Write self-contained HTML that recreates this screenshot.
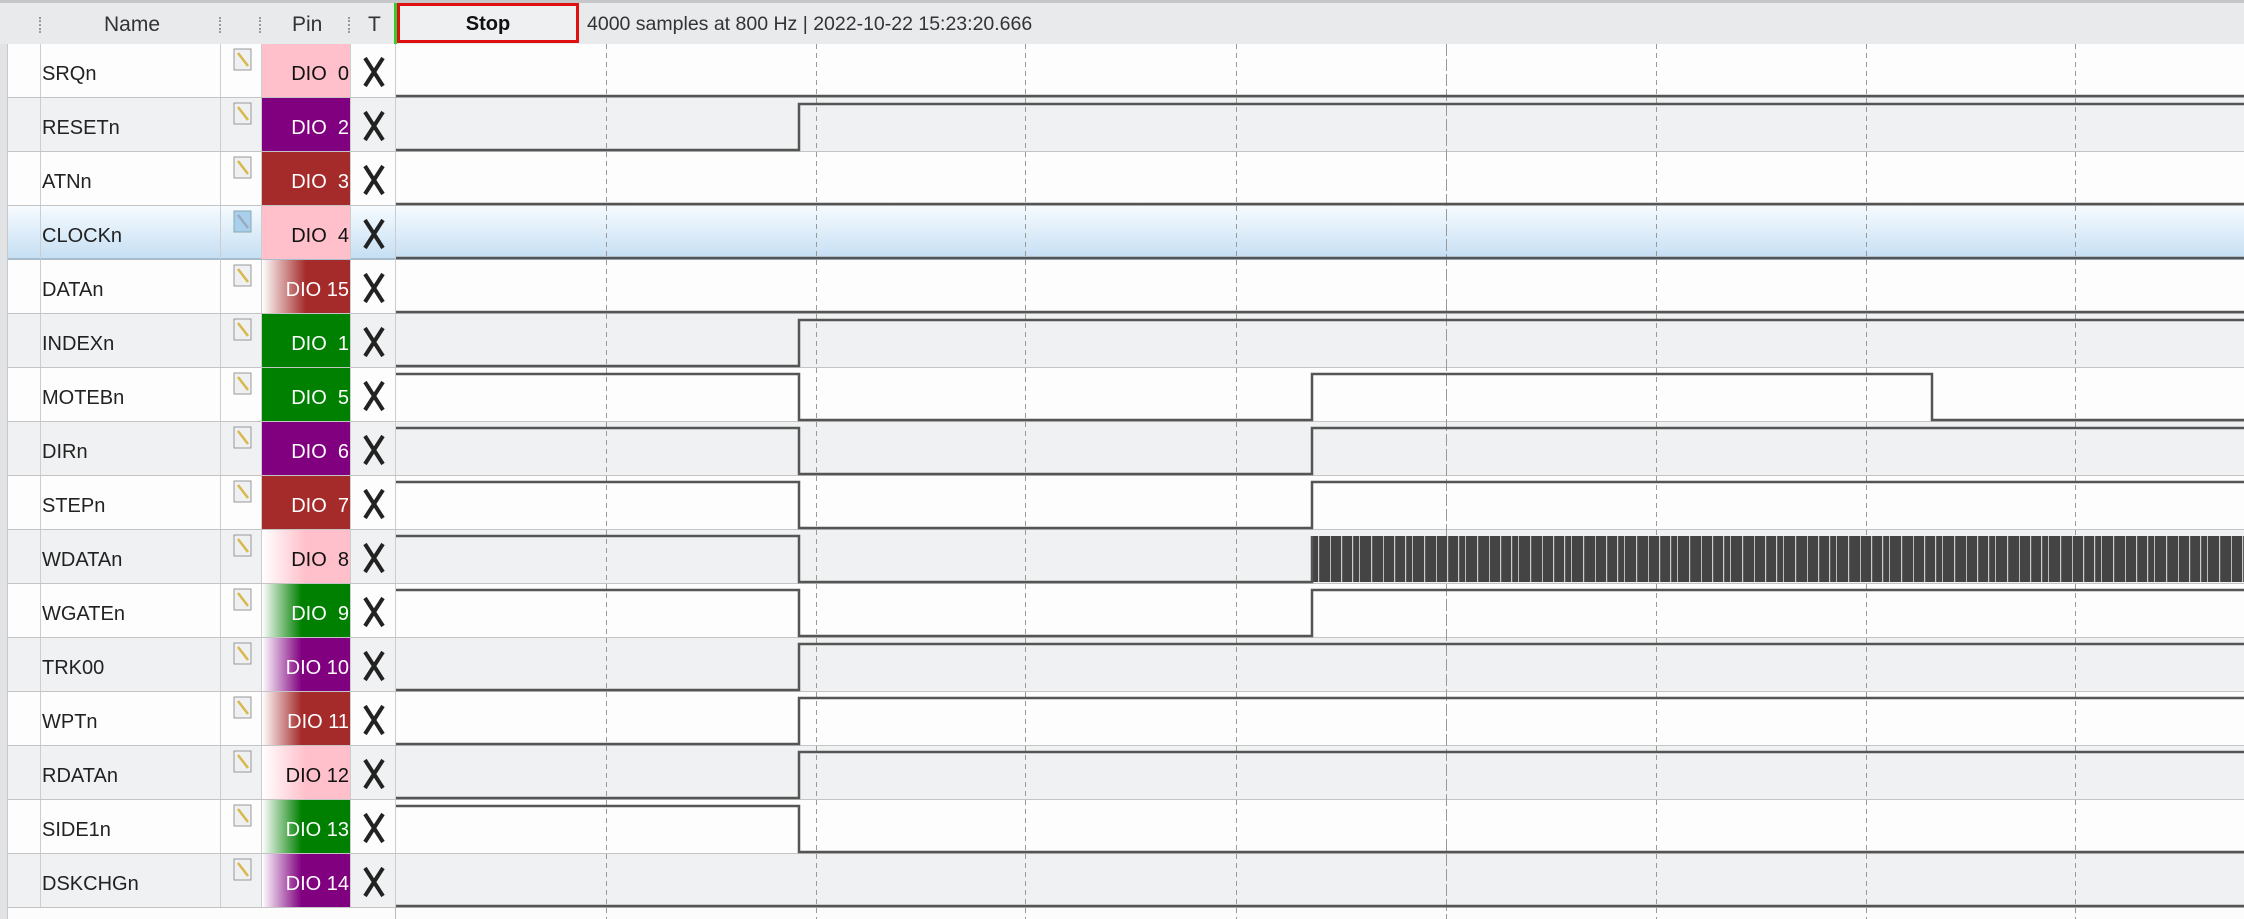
<!DOCTYPE html>
<html><head><meta charset="utf-8"><style>
*{margin:0;padding:0;box-sizing:border-box}
body{width:2244px;height:919px;overflow:hidden;background:#fcfcfc;font-family:"Liberation Sans","DejaVu Sans",sans-serif;position:relative}
.hdr{position:absolute;left:0;top:0;width:2244px;height:44px;background:#e9eaeb;border-top:3px solid #c6c7c8}
.ht{position:absolute;top:10px;font-size:21px;color:#333}
.sep{position:absolute;top:14px;width:2px;height:16px;border-left:2px dotted #999}
.stop{position:absolute;left:397px;top:3px;width:182px;height:40px;border:3px solid #e01010;background:#eef0f1;font-weight:bold;font-size:20px;text-align:center;line-height:36px;color:#111}
.gl{position:absolute;left:394px;top:3px;width:3px;height:41px;background:#3c3}
.st{position:absolute;left:587px;top:13px;font-size:19.5px;color:#333;white-space:pre}
.strip{position:absolute;left:0;top:44px;width:8px;height:875px;background:#e2e3e4;border-right:1px solid #c9c9c9}
.row{position:absolute;left:8px;width:2236px;height:54px;border-bottom:1px solid #c4c4c4}
.r0{background:#fdfdfd}.r1{background:#f0f1f2}
.sel{background:linear-gradient(#f6fbff,#c6dff3);border-bottom:2px solid #a9bccb}
.c{position:absolute;top:0;height:53px;border-right:1px solid #cdcdcd}
.nm{left:33px;width:180px;font-size:20px;color:#222;line-height:53px;padding-left:1px;padding-top:4px}
.pin{left:254px;width:89px;font-size:20px;line-height:53px;text-align:right;white-space:pre;padding-right:1px;padding-top:4px}
.ic{position:absolute;left:225px;top:4px}
.x{position:absolute;left:354px;top:12px}
</style></head><body>
<div class="hdr">
<div class="sep" style="left:39px"></div>
<div class="ht" style="left:104px">Name</div>
<div class="sep" style="left:219px"></div>
<div class="sep" style="left:259px"></div>
<div class="ht" style="left:292px">Pin</div>
<div class="sep" style="left:348px"></div>
<div class="ht" style="left:368px">T</div>
</div>
<div class="gl"></div>
<div class="stop">Stop</div>
<div class="st">4000 samples at 800 Hz | 2022-10-22 15:23:20.666</div>
<div class="strip"></div>

<div class="row r0" style="top:44px"><div class="c" style="left:0;width:33px"></div><div class="c nm">SRQn</div><div class="c" style="left:213px;width:41px"></div><svg class="ic" width="20" height="24"><rect x="1" y="1" width="17" height="21" fill="#eef0f2" stroke="#999"/><line x1="5" y1="5" x2="15" y2="18" stroke="#d9b84a" stroke-width="2.5"/></svg><div class="c pin" style="background:#ffc0cb;color:#111">DIO  0</div><div class="c" style="left:343px;width:45px"></div><svg class="x" width="24" height="32"><path d="M3 2L21 30M21 2L3 30" stroke="#222" stroke-width="4"/></svg></div>
<div class="row r1" style="top:98px"><div class="c" style="left:0;width:33px"></div><div class="c nm">RESETn</div><div class="c" style="left:213px;width:41px"></div><svg class="ic" width="20" height="24"><rect x="1" y="1" width="17" height="21" fill="#eef0f2" stroke="#999"/><line x1="5" y1="5" x2="15" y2="18" stroke="#d9b84a" stroke-width="2.5"/></svg><div class="c pin" style="background:#800080;color:#fff">DIO  2</div><div class="c" style="left:343px;width:45px"></div><svg class="x" width="24" height="32"><path d="M3 2L21 30M21 2L3 30" stroke="#222" stroke-width="4"/></svg></div>
<div class="row r0" style="top:152px"><div class="c" style="left:0;width:33px"></div><div class="c nm">ATNn</div><div class="c" style="left:213px;width:41px"></div><svg class="ic" width="20" height="24"><rect x="1" y="1" width="17" height="21" fill="#eef0f2" stroke="#999"/><line x1="5" y1="5" x2="15" y2="18" stroke="#d9b84a" stroke-width="2.5"/></svg><div class="c pin" style="background:#a52a2a;color:#fff">DIO  3</div><div class="c" style="left:343px;width:45px"></div><svg class="x" width="24" height="32"><path d="M3 2L21 30M21 2L3 30" stroke="#222" stroke-width="4"/></svg></div>
<div class="row sel" style="top:206px"><div class="c" style="left:0;width:33px"></div><div class="c nm">CLOCKn</div><div class="c" style="left:213px;width:41px"></div><svg class="ic" width="20" height="24"><rect x="1" y="1" width="17" height="21" fill="#a9cfee" stroke="#8aa"/><line x1="5" y1="5" x2="15" y2="18" stroke="#9ab" stroke-width="2.5"/></svg><div class="c pin" style="background:#ffc0cb;color:#111">DIO  4</div><div class="c" style="left:343px;width:45px"></div><svg class="x" width="24" height="32"><path d="M3 2L21 30M21 2L3 30" stroke="#222" stroke-width="4"/></svg></div>
<div class="row r0" style="top:260px"><div class="c" style="left:0;width:33px"></div><div class="c nm">DATAn</div><div class="c" style="left:213px;width:41px"></div><svg class="ic" width="20" height="24"><rect x="1" y="1" width="17" height="21" fill="#eef0f2" stroke="#999"/><line x1="5" y1="5" x2="15" y2="18" stroke="#d9b84a" stroke-width="2.5"/></svg><div class="c pin" style="background:linear-gradient(to right,#fff 0%,#a52a2a 50%);color:#fff">DIO 15</div><div class="c" style="left:343px;width:45px"></div><svg class="x" width="24" height="32"><path d="M3 2L21 30M21 2L3 30" stroke="#222" stroke-width="4"/></svg></div>
<div class="row r1" style="top:314px"><div class="c" style="left:0;width:33px"></div><div class="c nm">INDEXn</div><div class="c" style="left:213px;width:41px"></div><svg class="ic" width="20" height="24"><rect x="1" y="1" width="17" height="21" fill="#eef0f2" stroke="#999"/><line x1="5" y1="5" x2="15" y2="18" stroke="#d9b84a" stroke-width="2.5"/></svg><div class="c pin" style="background:#008000;color:#fff">DIO  1</div><div class="c" style="left:343px;width:45px"></div><svg class="x" width="24" height="32"><path d="M3 2L21 30M21 2L3 30" stroke="#222" stroke-width="4"/></svg></div>
<div class="row r0" style="top:368px"><div class="c" style="left:0;width:33px"></div><div class="c nm">MOTEBn</div><div class="c" style="left:213px;width:41px"></div><svg class="ic" width="20" height="24"><rect x="1" y="1" width="17" height="21" fill="#eef0f2" stroke="#999"/><line x1="5" y1="5" x2="15" y2="18" stroke="#d9b84a" stroke-width="2.5"/></svg><div class="c pin" style="background:#008000;color:#fff">DIO  5</div><div class="c" style="left:343px;width:45px"></div><svg class="x" width="24" height="32"><path d="M3 2L21 30M21 2L3 30" stroke="#222" stroke-width="4"/></svg></div>
<div class="row r1" style="top:422px"><div class="c" style="left:0;width:33px"></div><div class="c nm">DIRn</div><div class="c" style="left:213px;width:41px"></div><svg class="ic" width="20" height="24"><rect x="1" y="1" width="17" height="21" fill="#eef0f2" stroke="#999"/><line x1="5" y1="5" x2="15" y2="18" stroke="#d9b84a" stroke-width="2.5"/></svg><div class="c pin" style="background:#800080;color:#fff">DIO  6</div><div class="c" style="left:343px;width:45px"></div><svg class="x" width="24" height="32"><path d="M3 2L21 30M21 2L3 30" stroke="#222" stroke-width="4"/></svg></div>
<div class="row r0" style="top:476px"><div class="c" style="left:0;width:33px"></div><div class="c nm">STEPn</div><div class="c" style="left:213px;width:41px"></div><svg class="ic" width="20" height="24"><rect x="1" y="1" width="17" height="21" fill="#eef0f2" stroke="#999"/><line x1="5" y1="5" x2="15" y2="18" stroke="#d9b84a" stroke-width="2.5"/></svg><div class="c pin" style="background:#a52a2a;color:#fff">DIO  7</div><div class="c" style="left:343px;width:45px"></div><svg class="x" width="24" height="32"><path d="M3 2L21 30M21 2L3 30" stroke="#222" stroke-width="4"/></svg></div>
<div class="row r1" style="top:530px"><div class="c" style="left:0;width:33px"></div><div class="c nm">WDATAn</div><div class="c" style="left:213px;width:41px"></div><svg class="ic" width="20" height="24"><rect x="1" y="1" width="17" height="21" fill="#eef0f2" stroke="#999"/><line x1="5" y1="5" x2="15" y2="18" stroke="#d9b84a" stroke-width="2.5"/></svg><div class="c pin" style="background:linear-gradient(to right,#fff 0%,#ffc0cb 50%);color:#111">DIO  8</div><div class="c" style="left:343px;width:45px"></div><svg class="x" width="24" height="32"><path d="M3 2L21 30M21 2L3 30" stroke="#222" stroke-width="4"/></svg></div>
<div class="row r0" style="top:584px"><div class="c" style="left:0;width:33px"></div><div class="c nm">WGATEn</div><div class="c" style="left:213px;width:41px"></div><svg class="ic" width="20" height="24"><rect x="1" y="1" width="17" height="21" fill="#eef0f2" stroke="#999"/><line x1="5" y1="5" x2="15" y2="18" stroke="#d9b84a" stroke-width="2.5"/></svg><div class="c pin" style="background:linear-gradient(to right,#fff 0%,#008000 45%);color:#fff">DIO  9</div><div class="c" style="left:343px;width:45px"></div><svg class="x" width="24" height="32"><path d="M3 2L21 30M21 2L3 30" stroke="#222" stroke-width="4"/></svg></div>
<div class="row r1" style="top:638px"><div class="c" style="left:0;width:33px"></div><div class="c nm">TRK00</div><div class="c" style="left:213px;width:41px"></div><svg class="ic" width="20" height="24"><rect x="1" y="1" width="17" height="21" fill="#eef0f2" stroke="#999"/><line x1="5" y1="5" x2="15" y2="18" stroke="#d9b84a" stroke-width="2.5"/></svg><div class="c pin" style="background:linear-gradient(to right,#fff 0%,#800080 45%);color:#fff">DIO 10</div><div class="c" style="left:343px;width:45px"></div><svg class="x" width="24" height="32"><path d="M3 2L21 30M21 2L3 30" stroke="#222" stroke-width="4"/></svg></div>
<div class="row r0" style="top:692px"><div class="c" style="left:0;width:33px"></div><div class="c nm">WPTn</div><div class="c" style="left:213px;width:41px"></div><svg class="ic" width="20" height="24"><rect x="1" y="1" width="17" height="21" fill="#eef0f2" stroke="#999"/><line x1="5" y1="5" x2="15" y2="18" stroke="#d9b84a" stroke-width="2.5"/></svg><div class="c pin" style="background:linear-gradient(to right,#fff 0%,#a52a2a 45%);color:#fff">DIO 11</div><div class="c" style="left:343px;width:45px"></div><svg class="x" width="24" height="32"><path d="M3 2L21 30M21 2L3 30" stroke="#222" stroke-width="4"/></svg></div>
<div class="row r1" style="top:746px"><div class="c" style="left:0;width:33px"></div><div class="c nm">RDATAn</div><div class="c" style="left:213px;width:41px"></div><svg class="ic" width="20" height="24"><rect x="1" y="1" width="17" height="21" fill="#eef0f2" stroke="#999"/><line x1="5" y1="5" x2="15" y2="18" stroke="#d9b84a" stroke-width="2.5"/></svg><div class="c pin" style="background:linear-gradient(to right,#fff 0%,#ffc0cb 50%);color:#111">DIO 12</div><div class="c" style="left:343px;width:45px"></div><svg class="x" width="24" height="32"><path d="M3 2L21 30M21 2L3 30" stroke="#222" stroke-width="4"/></svg></div>
<div class="row r0" style="top:800px"><div class="c" style="left:0;width:33px"></div><div class="c nm">SIDE1n</div><div class="c" style="left:213px;width:41px"></div><svg class="ic" width="20" height="24"><rect x="1" y="1" width="17" height="21" fill="#eef0f2" stroke="#999"/><line x1="5" y1="5" x2="15" y2="18" stroke="#d9b84a" stroke-width="2.5"/></svg><div class="c pin" style="background:linear-gradient(to right,#fff 0%,#008000 45%);color:#fff">DIO 13</div><div class="c" style="left:343px;width:45px"></div><svg class="x" width="24" height="32"><path d="M3 2L21 30M21 2L3 30" stroke="#222" stroke-width="4"/></svg></div>
<div class="row r1" style="top:854px"><div class="c" style="left:0;width:33px"></div><div class="c nm">DSKCHGn</div><div class="c" style="left:213px;width:41px"></div><svg class="ic" width="20" height="24"><rect x="1" y="1" width="17" height="21" fill="#eef0f2" stroke="#999"/><line x1="5" y1="5" x2="15" y2="18" stroke="#d9b84a" stroke-width="2.5"/></svg><div class="c pin" style="background:linear-gradient(to right,#fff 0%,#800080 45%);color:#fff">DIO 14</div><div class="c" style="left:343px;width:45px"></div><svg class="x" width="24" height="32"><path d="M3 2L21 30M21 2L3 30" stroke="#222" stroke-width="4"/></svg></div>
<div style="position:absolute;left:395px;top:908px;width:1px;height:11px;background:#bbb"></div>

<svg style="position:absolute;left:396px;top:44px" width="1848" height="875">
<defs>
<pattern id="p1" width="53" height="46" patternUnits="userSpaceOnUse">
<rect width="53" height="46" fill="#444"/>
<rect x="2" width="1.2" height="46" fill="#ccc"/><rect x="9" width="1" height="46" fill="#bbb"/><rect x="21" width="1.2" height="46" fill="#ccc"/><rect x="33" width="1" height="46" fill="#bbb"/><rect x="44" width="1.2" height="46" fill="#ccc"/>
</pattern>
</defs>
<g stroke="#999" stroke-width="1" stroke-dasharray="5 4">
<line x1="210.5" y1="0" x2="210.5" y2="875"/><line x1="420.5" y1="0" x2="420.5" y2="875"/><line x1="629.5" y1="0" x2="629.5" y2="875"/><line x1="840.5" y1="0" x2="840.5" y2="875"/><line x1="1050.5" y1="0" x2="1050.5" y2="875" stroke-dasharray="12 3"/><line x1="1260.5" y1="0" x2="1260.5" y2="875"/><line x1="1470.5" y1="0" x2="1470.5" y2="875"/><line x1="1679.5" y1="0" x2="1679.5" y2="875"/>
</g>
<rect x="916" y="492" width="932" height="46" fill="url(#p1)"/>
<g fill="none" stroke="#555" stroke-width="2.5">
<path d="M0 52H1848"/>
<path d="M0 106H403V60H1848"/>
<path d="M0 160H1848"/>
<path d="M0 214H1848"/>
<path d="M0 268H1848"/>
<path d="M0 322H403V276H1848"/>
<path d="M0 330H403V376H916V330H1536V376H1848"/>
<path d="M0 384H403V430H916V384H1848"/>
<path d="M0 438H403V484H916V438H1848"/>
<path d="M0 492H403V538H916V492"/>
<path d="M0 546H403V592H916V546H1848"/>
<path d="M0 646H403V600H1848"/>
<path d="M0 700H403V654H1848"/>
<path d="M0 754H403V708H1848"/>
<path d="M0 762H403V808H1848"/>
<path d="M0 862H1848"/>
</g>
</svg>
</body></html>
